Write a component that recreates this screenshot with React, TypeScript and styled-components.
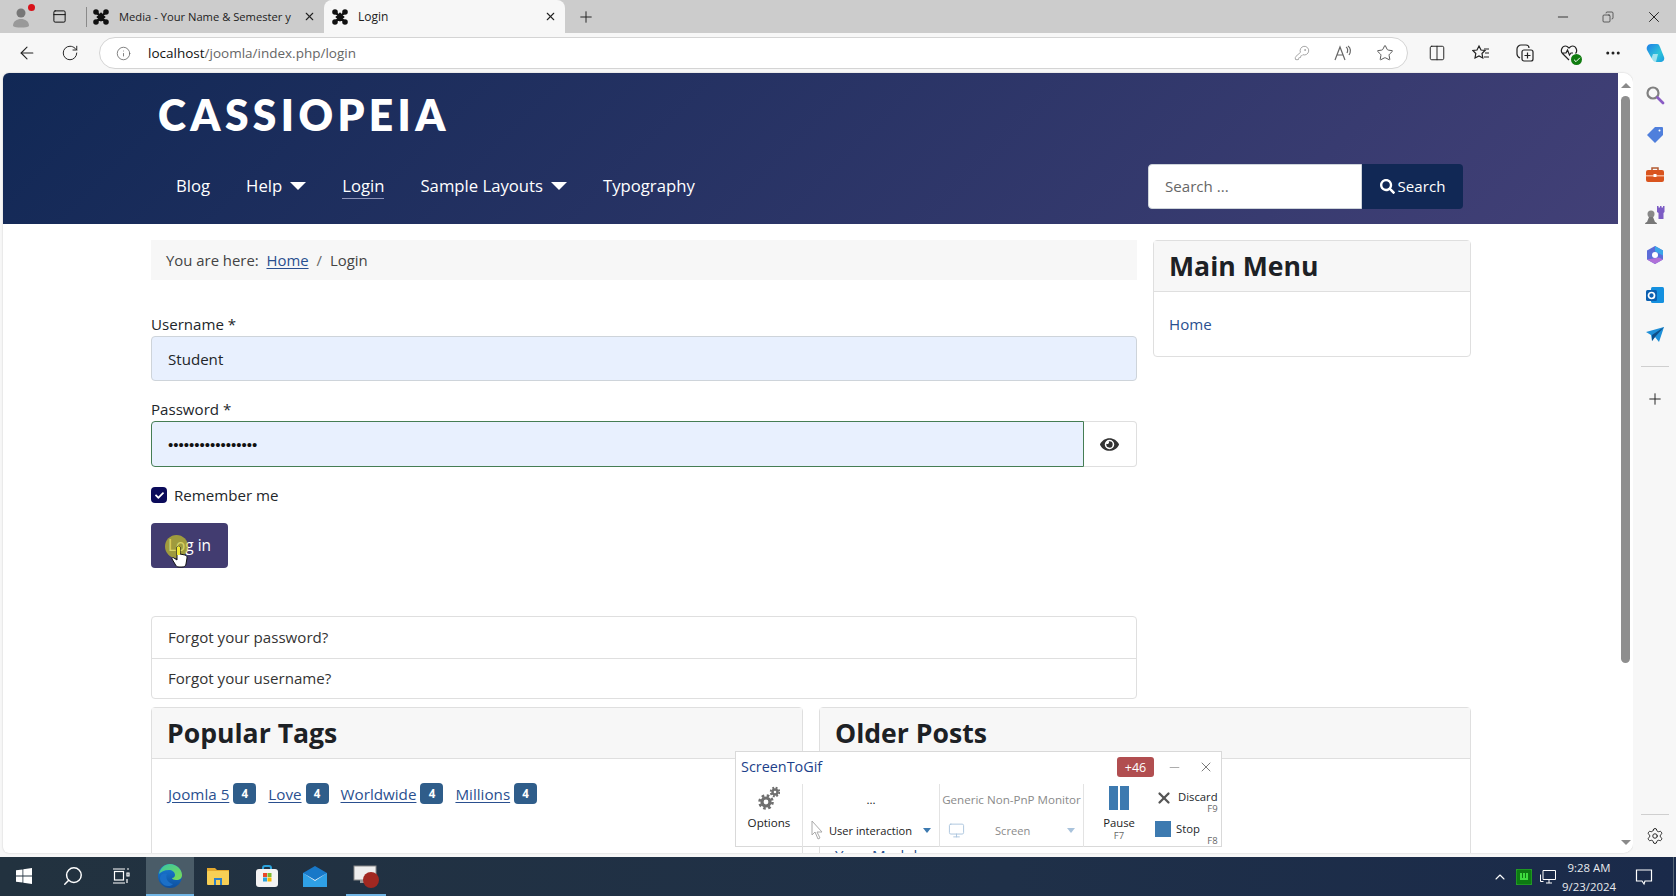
import React from "react";
import styled, { createGlobalStyle } from "styled-components";
import { ArrowLeft, RotateCw, Info, KeyRound, Star, Columns2, Copy, Minus, X, Plus, MoreHorizontal, Search, Settings, PanelTop, ChevronUp, Monitor, Check } from "lucide-react";
import { FaEye, FaSearch, FaCheck } from "react-icons/fa";

const Global = createGlobalStyle`
  html, body { margin: 0; padding: 0; height: 100%; overflow: hidden; }
  body { font-family: "Open Sans", "Liberation Sans", sans-serif; color: #22262a; }
  * { box-sizing: border-box; }
`;
const Screen = styled.div`position: relative; width: 1676px; height: 896px; display: flex; flex-direction: column; background: #f7f7f7; overflow: hidden;`;

const TabBar = styled.div`height: 33px; background: #cccccc; display: flex; align-items: stretch; padding-left: 6px; flex: none;`;
const Avatar = styled.div`position: relative; width: 30px; display: flex; align-items: center; justify-content: center;`;
const RedDot = styled.span`position: absolute; right: 1px; top: 4px; width: 7px; height: 7px; background: #d8121a; border-radius: 50%;`;
const TabIconBtn = styled.div`width: 46px; display: flex; align-items: center; justify-content: center;`;
const Sep = styled.div`width: 1px; height: 20px; margin-left: 4px; background: #8a8a8a; align-self: center;`;
const Tab = styled.div<{ $active?: boolean }>`
  width: ${(p) => (p.$active ? "241px" : "237px")}; display: flex; align-items: center; gap: 10px;
  padding-left: ${(p) => (p.$active ? "8px" : "6px")};
  font-size: ${(p) => (p.$active ? "12px" : "11.2px")}; color: #222; white-space: nowrap; flex: none;
  background: ${(p) => (p.$active ? "#f7f7f7" : "transparent")};
  border-radius: ${(p) => (p.$active ? "8px 8px 0 0" : "0")};
`;
const TabTitle = styled.span`flex: 1; min-width: 0;`;
const TabClose = styled.span`width: 24px; margin-right: 3px; display: flex; justify-content: center; flex: none;`;
const NewTab = styled.div`width: 42px; display: flex; align-items: center; justify-content: center;`;
const Grow = styled.div`flex: 1;`;
const WinBtns = styled.div`display: flex; align-items: center; gap: 31px; padding-right: 13px;`;

const ToolBar = styled.div`height: 40px; display: flex; align-items: center; flex: none; padding-left: 17px; background: #f7f7f7;`;
const NavIcon = styled.div<{ $w: number }>`width: ${(p) => p.$w}px; height: 24px; display: flex; align-items: center; justify-content: flex-start;`;
const AddressBar = styled.div`width: 1309px; height: 32px; border: 1px solid #d4d4d4; border-radius: 16px; background: #fff; display: flex; align-items: center; padding: 0 13px 0 16px;`;
const Url = styled.div`margin-left: 17px; flex: 1; font-size: 13.5px; color: #666;`;
const UrlHost = styled.span`color: #111;`;
const AddrIcons = styled.div`display: flex; align-items: center; gap: 23px;`;
const ToolIcons = styled.div`display: flex; align-items: center; gap: 26px; margin-left: 20px;`;
const CopilotSlot = styled.div`margin-left: -4px; display: flex;`;
const HealthWrap = styled.div`position: relative; width: 18px; height: 18px;`;
const HealthBadge = styled.span`position: absolute; right: -4px; bottom: -3px; width: 11px; height: 11px; background: #107c10; border-radius: 50%; display: flex; align-items: center; justify-content: center;`;

const Middle = styled.div`flex: 1; display: flex; min-height: 0; padding: 0 0 4px 3px;`;
const Page = styled.div`flex: 1; min-width: 0; display: flex; background: #fff; border-radius: 6px 10px 10px 6px; overflow: hidden; box-shadow: 0 0 2px rgba(0,0,0,.2);`;
const PageBody = styled.div`width: 1615px; flex: none; overflow: hidden;`;
const ScrollTrack = styled.div`flex: 1; display: flex; flex-direction: column; align-items: center; padding-top: 10px; padding-bottom: 8px; background: #fff;`;
const ArrowUp = styled.div`width: 0; height: 0; border-left: 5px solid transparent; border-right: 5px solid transparent; border-bottom: 5px solid #8a8a8a;`;
const ArrowDown = styled.div`width: 0; height: 0; border-left: 5px solid transparent; border-right: 5px solid transparent; border-top: 5px solid #8a8a8a; margin-top: auto;`;
const Thumb = styled.div`width: 9px; height: 567px; margin-top: 8px; background: #8e8e8e; border-radius: 5px;`;

const SideBar = styled.div`width: 43px; flex: none; background: #f7f7f7; display: flex; flex-direction: column; align-items: center; padding-top: 12px; gap: 20px;`;
const SideIcon = styled.svg`width: 20px; height: 20px; flex: none;`;
const SideRule = styled.div`width: 28px; height: 1px; background: #cfcfcf;`;
const FirstRule = styled(SideRule)`margin-top: 1px;`;
const SidePlus = styled.div`margin-top: 3px; display: flex;`;
const SideSettings = styled.div`margin-top: auto; padding-bottom: 8px; display: flex; flex-direction: column; align-items: center; gap: 12px;`;

const Header = styled.header`height: 151px; background: linear-gradient(135deg, #112855 0%, #424077 100%); color: #fff; padding: 0 147px; display: flex; flex-direction: column;`;
const Brand = styled.div`margin: 22px 0 0 8px; height: 40px; font: 800 42.5px/40px "Lato", sans-serif; letter-spacing: 4.4px; color: #fff; white-space: nowrap;`;
const NavRow = styled.div`display: flex; align-items: center; justify-content: space-between; margin-top: 29px;`;
const NavList = styled.nav`display: flex; align-items: center; gap: 36px; padding-left: 26px; font-size: 16.7px;`;
const NavLink = styled.a<{ $current?: boolean }>`color: #fff; display: inline-flex; align-items: center; gap: 8px; padding-bottom: 1px; border-bottom: 1px solid ${(p) => (p.$current ? "#8d93b8" : "transparent")};`;
const Caret = styled.span`display: inline-block; width: 0; height: 0; border-left: 8px solid transparent; border-right: 8px solid transparent; border-top: 8px solid #fff;`;
const SearchBox = styled.div`display: flex; height: 45px; margin-right: 8px;`;
const SearchInput = styled.div`width: 214px; background: #fff; border: 1px solid #ced4da; border-radius: 4px 0 0 4px; color: #666; font-size: 15.1px; display: flex; align-items: center; padding: 0 0 2px 16px;`;
const SearchBtn = styled.div`width: 101px; background: #112855; border-radius: 0 4px 4px 0; color: #fff; font-size: 15.1px; display: flex; align-items: center; justify-content: center; gap: 3px; padding-bottom: 1px;`;

const Content = styled.div`display: grid; grid-template-columns: 986px 318px; column-gap: 16px; padding: 16px 0 0 148px;`;
const MainCol = styled.main`display: flex; flex-direction: column;`;
const SideCol = styled.aside``;
const Breadcrumb = styled.div`height: 40px; background: #f7f7f7; display: flex; align-items: center; padding-left: 15px; font-size: 14.9px; color: #444;`;
const Link = styled.a`color: #2a4f8f; text-decoration: underline; text-underline-offset: 2px;`;
const Slash = styled.span`margin: 0 8px; color: #666;`;
const UserField = styled.div`display: flex; flex-direction: column; margin-top: 33px;`;
const PassField = styled.div`display: flex; flex-direction: column; margin-top: 17px;`;
const Label = styled.label`font-size: 15.1px; line-height: 22px; margin-bottom: 1px;`;
const TextInput = styled.div`height: 45px; background: #e8f0fe; border: 1px solid #ced4da; border-radius: 4px; display: flex; align-items: center; padding-left: 16px; font-size: 15.1px; color: #212529;`;
const PassRow = styled.div`display: flex; height: 46px;`;
const PassInput = styled.div`flex: 1; background: #e8f0fe; border: 1px solid #457d54; border-radius: 4px 0 0 4px; display: flex; align-items: center; padding-left: 16px; font: 15px "Liberation Sans", sans-serif; color: #111;`;
const EyeBtn = styled.div`width: 53px; border: 1px solid #dfdfdf; border-left: none; border-radius: 0 4px 4px 0; display: flex; align-items: center; justify-content: center; padding-right: 2px;`;
const CheckRow = styled.div`display: flex; align-items: center; gap: 7px; margin-top: 17px; font-size: 15.1px; height: 22px;`;
const CheckBox = styled.span`width: 16px; height: 16px; border-radius: 4px; background: #0a0a5a; display: flex; align-items: center; justify-content: center;`;
const LoginBtn = styled.button`position: relative; align-self: flex-start; margin-top: 17px; width: 77px; height: 45px; border: none; border-radius: 4px; background: #423c70; color: #fff; font: 15.4px "Open Sans", sans-serif;`;
const ClickDot = styled.span`position: absolute; left: 14px; top: 12px; width: 23px; height: 23px; border-radius: 50%; background: rgba(200,195,40,.7);`;
const Cursor = styled.svg`position: absolute; left: 20px; top: 22px; width: 18px; height: 24px;`;
const LinkList = styled.div`margin-top: 48px; border: 1px solid #dfdfdf; border-radius: 4px;`;
const LinkItem = styled.div`height: 40.5px; display: flex; align-items: center; padding-left: 16px; font-size: 15.1px; color: #333; & + & { border-top: 1px solid #dfdfdf; }`;
const BottomRow = styled.div`grid-column: 1 / span 2; display: grid; grid-template-columns: 652px 652px; column-gap: 16px; margin-top: 8px;`;
const Card = styled.section`border: 1px solid #dfdfdf; border-radius: 4px; background: #fff; display: flex; flex-direction: column; min-height: 170px;`;
const CardHead = styled.h3`margin: 0; flex: none; height: 51px; background: #f7f7f7; border-bottom: 1px solid #dfdfdf; display: flex; align-items: center; padding-left: 15px; font-size: 26.6px; font-weight: 700; color: #1d2125; line-height: 1;`;
const CardBody = styled.div`padding: 24px 15px; font-size: 15.2px;`;
const TagRow = styled.div`display: flex; align-items: center; gap: 12px; padding-left: 1px;`;
const Tag = styled.span`display: inline-flex; align-items: center; gap: 4px;`;
const Badge = styled.span`width: 23px; height: 21px; border-radius: 4px; background: #2f5d8a; color: #fff; font-size: 11.5px; font-weight: 700; display: inline-flex; align-items: center; justify-content: center;`;
const ModuleLink = styled(Link)`display: block; padding-top: 62px;`;
const MenuCard = styled(Card)`min-height: 0; height: 117px;`;
const MenuBody = styled.div`padding: 22px 15px; font-size: 15.1px; color: #2a4f8f;`;

const TaskBar = styled.div`height: 39px; flex: none; background: linear-gradient(90deg, #22323f, #1f3048 60%, #1a2a4a); display: flex; align-items: stretch;`;
const TaskItem = styled.div<{ $active?: boolean }>`
  width: 48.5px; display: flex; align-items: center; justify-content: center;
  background: ${(p) => (p.$active ? "#4a5c68" : "transparent")};
  border-bottom: 2px solid ${(p) => (p.$active ? "#6fb4e4" : "transparent")};
`;
const OpenTaskItem = styled(TaskItem)`width: 40px; margin-left: 6.5px; border-bottom-color: #6fb4e4;`;
const Tray = styled.div`margin-left: auto; display: flex; align-items: center; color: #fff; gap: 8px;`;
const Clock = styled.div`font-size: 11.4px; line-height: 19px; text-align: center; color: #e8eaee; width: 64px; margin: 0 6px 0 -7px;`;
const ShowDesktop = styled.div`width: 1px; height: 100%; margin: 0 2px 0 12px; background: #566574;`;

const Recorder = styled.div`position: absolute; left: 735px; top: 751px; width: 487px; height: 96px; background: #fff; border: 1px solid #d9d9d9; display: flex; flex-direction: column;`;
const RecTop = styled.div`height: 32px; flex: none; display: flex; align-items: center; padding: 0 7px 0 5px;`;
const RecTitle = styled.div`color: #1c3f8a; font-size: 14.4px; flex: 1; padding-bottom: 3px;`;
const Count = styled.div`background: #b14e50; color: #fff; font-size: 12.5px; height: 20px; width: 37px; border-radius: 3px; display: flex; align-items: center; justify-content: center; margin: 0 13px 2px 0;`;
const RecBtns = styled.div`display: flex; align-items: center; gap: 16px; padding-bottom: 2px;`;
const RecRow = styled.div`flex: 1; display: grid; grid-template-columns: 67px 137px 144px 1fr;`;
const RecCell = styled.div`border-right: 1px solid #e3e3e3; display: flex; flex-direction: column; align-items: center; color: #222; margin-bottom: 2px; min-width: 0;`;
const RecOptions = styled(RecCell)`font-size: 11.6px; gap: 5px; padding-top: 2px;`;
const RecLine = styled.div<{ $muted?: boolean }>`height: 30px; width: 100%; display: flex; align-items: center; gap: 4px; padding: 0 8px; font-size: 11.1px; white-space: nowrap; color: ${(p) => (p.$muted ? "#8a8a8a" : "#222")};`;
const Centered = styled(RecLine)`justify-content: center; padding: 0 2px; height: 31px; font-size: 11.6px;`;
const ScreenLabel = styled.span`margin-left: 26px;`;
const SmallCaret = styled.span<{ $muted?: boolean }>`margin-left: auto; width: 0; height: 0; border-left: 4px solid transparent; border-right: 4px solid transparent; border-top: 5px solid ${(p) => (p.$muted ? "#a9c3dc" : "#3d7ab0")};`;
const RecAction = styled.div`display: grid; grid-template-columns: 60px 1fr; padding: 0 5px; font-size: 11.3px;`;
const PauseCol = styled.div`display: flex; flex-direction: column; align-items: center; padding-top: 2px; color: #222; line-height: 15px;`;
const PauseBars = styled.div`display: flex; gap: 2px; margin-bottom: 5px;`;
const PauseBar = styled.span`width: 9px; height: 24px; background: #3d7ab0;`;
const Key = styled.span`font-size: 9.5px; color: #666; line-height: 11px;`;
const ActCol = styled.div`display: flex; flex-direction: column; gap: 4px; padding: 5px 0 0 6px;`;
const Act = styled.div`position: relative; display: flex; align-items: flex-start; gap: 5px; height: 28px; line-height: 16px;`;
const ActKey = styled(Key)`position: absolute; right: 0; bottom: 3px;`;
const StopSq = styled.span`width: 16px; height: 16px; background: #3d7ab0;`;

const JoomlaIcon = () => (
  <svg width="16" height="16" viewBox="0 0 16 16" fill="none" stroke="#111" strokeWidth="2.4" strokeLinecap="round">
    <path d="M3 3l10 10M13 3L3 13M5 8l3-3 3 3-3 3z" />
    <circle cx="3" cy="3" r="1.6" fill="#111" /><circle cx="13" cy="3" r="1.6" fill="#111" /><circle cx="3" cy="13" r="1.6" fill="#111" /><circle cx="13" cy="13" r="1.6" fill="#111" />
  </svg>
);

export default function App() {
  const S = { strokeWidth: 1.3 } as const;
  return (
    <Screen>
      <Global />
      <TabBar>
        <Avatar>
          <svg width="20" height="22" viewBox="0 0 20 22"><circle cx="10" cy="7" r="4.5" fill="#777" /><path d="M2 20c0-5 4-7 8-7s8 2 8 7c-2 2-14 2-16 0z" fill="#999" /></svg>
          <RedDot />
        </Avatar>
        <TabIconBtn><PanelTop size={15} color="#111" strokeWidth={1.6} /></TabIconBtn>
        <Sep />
        <Tab><JoomlaIcon /><TabTitle>Media - Your Name &amp; Semester y</TabTitle><TabClose><X size={13} color="#222" /></TabClose></Tab>
        <Tab $active><JoomlaIcon /><TabTitle>Login</TabTitle><TabClose><X size={13} color="#222" /></TabClose></Tab>
        <NewTab><Plus size={18} color="#222" strokeWidth={1.3} /></NewTab>
        <Grow />
        <WinBtns>
          <Minus size={16} color="#222" {...S} />
          <Copy size={12} color="#222" {...S} style={{ transform: "scaleX(-1)" }} />
          <X size={18} color="#222" {...S} />
        </WinBtns>
      </TabBar>
      <ToolBar>
        <NavIcon $w={44}><ArrowLeft size={20} color="#222" {...S} /></NavIcon>
        <NavIcon $w={38}><RotateCw size={18} color="#222" {...S} /></NavIcon>
        <AddressBar>
          <Info size={15} color="#666" {...S} />
          <Url><UrlHost>localhost</UrlHost>/joomla/index.php/login</Url>
          <AddrIcons>
            <KeyRound size={16} color="#999" {...S} />
            <svg width="20" height="18" viewBox="0 0 20 18" fill="none" stroke="#666" strokeWidth="1.2"><path d="M2 16L7 3l5 13M4 11h6M13 3c2 1 2 4 1 6M15 2c3 2 3 6 1 9" /></svg>
            <Star size={18} color="#555" {...S} />
          </AddrIcons>
        </AddressBar>
        <ToolIcons>
          <Columns2 size={18} color="#222" {...S} />
          <svg width="18" height="18" viewBox="0 0 18 18" fill="none" stroke="#222" strokeWidth="1.2"><path d="M7 2l2 4 4 .5-3 3 .8 4.500L7 12l-4 2 .8-4.500-3-3L5 6z" /><path d="M12 5h5M13 9h4M12 13h5" /></svg>
          <svg width="18" height="18" viewBox="0 0 18 18" fill="none" stroke="#222" strokeWidth="1.2"><rect x="6" y="6" width="11" height="11" rx="2" /><path d="M11.500 8.500v6M8.500 11.500h6M4 14c-2-1-3-2-3-4V5c0-2 2-4 4-4h5c1.500 0 3 1 3 3" /></svg>
          <HealthWrap>
            <svg width="18" height="18" viewBox="0 0 18 18" fill="none" stroke="#222" strokeWidth="1.2"><path d="M9 16L2.500 9.500C0 7 2 2 5.500 2 7 2 8 3 9 4c1-1 2-2 3.500-2C16 2 18 7 15.500 9.500M2 9h4l1.500-3 2 5 1.500-2h2" /></svg>
            <HealthBadge><Check size={8} color="#fff" strokeWidth={3} /></HealthBadge>
          </HealthWrap>
          <MoreHorizontal size={18} color="#222" />
          <CopilotSlot>
            <svg width="22" height="22" viewBox="0 0 22 22"><defs><linearGradient id="cop" x1="0" y1="0" x2="1" y2="1"><stop offset="0" stopColor="#1f7ee8" /><stop offset=".6" stopColor="#2cc5d8" /><stop offset="1" stopColor="#1a9ae0" /></linearGradient></defs><path d="M7 2h6c2 0 2 1 3 3l4 10c1 3-1 5-4 5h-4c-2 0-3-1-4-3L3 8C2 5 4 2 7 2z" fill="url(#cop)" /><path d="M6 20l3-8h5l-2 8z" fill="#fff" opacity=".55" /></svg>
          </CopilotSlot>
        </ToolIcons>
      </ToolBar>
      <Middle>
        <Page>
          <PageBody>
            <Header>
              <Brand>CASSIOPEIA</Brand>
              <NavRow>
                <NavList>
                  <NavLink>Blog</NavLink>
                  <NavLink>Help <Caret /></NavLink>
                  <NavLink $current>Login</NavLink>
                  <NavLink>Sample Layouts <Caret /></NavLink>
                  <NavLink>Typography</NavLink>
                </NavList>
                <SearchBox>
                  <SearchInput>Search ...</SearchInput>
                  <SearchBtn><FaSearch size={15} color="#fff" />Search</SearchBtn>
                </SearchBox>
              </NavRow>
            </Header>
            <Content>
              <MainCol>
                <Breadcrumb>You are here:&nbsp;&nbsp;<Link>Home</Link><Slash>/</Slash>Login</Breadcrumb>
                <UserField>
                  <Label>Username *</Label>
                  <TextInput>Student</TextInput>
                </UserField>
                <PassField>
                  <Label>Password *</Label>
                  <PassRow>
                    <PassInput>•••••••••••••••••</PassInput>
                    <EyeBtn><FaEye size={19} color="#333" /></EyeBtn>
                  </PassRow>
                </PassField>
                <CheckRow><CheckBox><FaCheck size={9} color="#fff" /></CheckBox>Remember me</CheckRow>
                <LoginBtn>
                  <ClickDot />
                  Log in
                  <Cursor viewBox="0 0 18 24"><path d="M6 2c1-1 2-1 3 0v7l5 1c2 .500 2 2 2 3l-1 6c0 2-2 3-4 3H8c-2 0-3-1-4-3l-3-5c-.5-1 1-2 2-1l3 2z" fill="#fff" stroke="#111" strokeWidth="1" /><path d="M6 2c1-1 2-1 3 0v8H6z" fill="#f3ea36" /></Cursor>
                </LoginBtn>
                <LinkList>
                  <LinkItem>Forgot your password?</LinkItem>
                  <LinkItem>Forgot your username?</LinkItem>
                </LinkList>
              </MainCol>
              <SideCol>
                <MenuCard>
                  <CardHead>Main Menu</CardHead>
                  <MenuBody>Home</MenuBody>
                </MenuCard>
              </SideCol>
              <BottomRow>
                <Card>
                  <CardHead>Popular Tags</CardHead>
                  <CardBody>
                    <TagRow>
                      <Tag><Link>Joomla 5</Link><Badge>4</Badge></Tag>
                      <Tag><Link>Love</Link><Badge>4</Badge></Tag>
                      <Tag><Link>Worldwide</Link><Badge>4</Badge></Tag>
                      <Tag><Link>Millions</Link><Badge>4</Badge></Tag>
                    </TagRow>
                  </CardBody>
                </Card>
                <Card>
                  <CardHead>Older Posts</CardHead>
                  <CardBody><ModuleLink>Your Modules</ModuleLink></CardBody>
                </Card>
              </BottomRow>
            </Content>
          </PageBody>
          <ScrollTrack><ArrowUp /><Thumb /><ArrowDown /></ScrollTrack>
        </Page>
        <SideBar>
          <SideIcon viewBox="0 0 20 20"><circle cx="8" cy="8" r="5.500" fill="none" stroke="#808080" strokeWidth="2.200" /><path d="M12.500 12.500L18 18" stroke="#8a5cc4" strokeWidth="2.800" strokeLinecap="round" /></SideIcon>
          <SideIcon viewBox="0 0 20 20"><path d="M10 2h7c1 0 1 1 1 1v7l-8 8-8-8z" fill="#4f7fdc" /><circle cx="14.500" cy="5.500" r="1" fill="#fff" /></SideIcon>
          <SideIcon viewBox="0 0 20 20"><path d="M7 5V3h6v2" fill="none" stroke="#b35a30" strokeWidth="1.500" /><rect x="1" y="5" width="18" height="12" rx="2" fill="#d9541e" /><rect x="1" y="10" width="18" height="1.500" fill="#f5b090" /><rect x="8.500" y="9" width="3" height="3" fill="#fff" /></SideIcon>
          <SideIcon viewBox="0 0 20 20"><circle cx="6" cy="9" r="3.500" fill="#888" /><path d="M0 19c0-1 1-2 2-2l2-5h4l2 5c1 0 2 1 2 2z" fill="#777" /><path d="M12 1h1.500v1.500H15V1h1.500v1.500H18V1h1.500v6l-1 1v6h-5V8l-1.500-1z" fill="#7c5cc4" /></SideIcon>
          <SideIcon viewBox="0 0 20 20"><path d="M10 1l8 4.500v9L10 19l-8-4.500v-9z" fill="#5c6cd8" /><path d="M10 1l8 4.500v5l-8-4z" fill="#3aa6e8" /><path d="M2 14.500L10 19l8-4.500-4-2z" fill="#b070d8" /><circle cx="10" cy="10" r="3" fill="#fff" /></SideIcon>
          <SideIcon viewBox="0 0 20 20"><rect x="6" y="2" width="13" height="16" rx="1.500" fill="#1490df" /><rect x="1" y="5" width="11" height="11" rx="1.500" fill="#0a5fb0" /><circle cx="6.500" cy="10.500" r="3" fill="none" stroke="#fff" strokeWidth="1.700" /></SideIcon>
          <SideIcon viewBox="0 0 20 20"><path d="M1 7l18-5-5 15-4-5-3 4-1-6z" fill="#1e8fd8" /><path d="M7 10l12-8-9 10-3 4z" fill="#0f4f8a" /></SideIcon>
          <FirstRule />
          <SidePlus><Plus size={18} color="#222" strokeWidth={1.3} /></SidePlus>
          <SideSettings>
            <SideRule />
            <Settings size={18} color="#222" {...S} />
          </SideSettings>
        </SideBar>
      </Middle>
      <TaskBar>
        <TaskItem>
          <svg width="16" height="16" viewBox="0 0 16 16" fill="#fff"><path d="M0 2.300l6.500-.9v6.200H0zM7.300 1.300L16 0v7.600H7.300zM0 8.400h6.500v6.200L0 13.700zM7.300 8.400H16V16l-8.700-1.200z" /></svg>
        </TaskItem>
        <TaskItem><Search size={22} color="#fff" strokeWidth={1.6} style={{ transform: "scaleX(-1)" }} /></TaskItem>
        <TaskItem>
          <svg width="18" height="16" viewBox="0 0 18 16" fill="none" stroke="#fff" strokeWidth="1.200"><rect x="2.500" y="3.500" width="9" height="8.500" /><path d="M1 1h12M1 15h12M15 1h2M15 5h2v3h-2zM15 11v4" /></svg>
        </TaskItem>
        <TaskItem $active>
          <svg width="26" height="26" viewBox="0 0 26 26"><defs><linearGradient id="e1" x1="0" y1="0" x2="1" y2="1"><stop offset="0" stopColor="#37c4a4" /><stop offset="1" stopColor="#7cdc54" /></linearGradient><linearGradient id="e2" x1="0" y1="0" x2="0" y2="1"><stop offset="0" stopColor="#1a7ed8" /><stop offset="1" stopColor="#0d4f9e" /></linearGradient></defs><circle cx="13" cy="13" r="12" fill="url(#e2)" /><path d="M2 11C3 5 8 1 13 1c6 0 12 5 12 11 0 3-2 5-6 5-2 0-4-1-4-2 2 0 3-2 3-3 0-3-3-5-6-5-5 0-8 2-10 4z" fill="url(#e1)" /><path d="M10 11c-2 4 1 9 6 10-1 2-6 3-9 1-4-3-5-7-3-10 1-1 4-2 6-1z" fill="#1b6fc7" /></svg>
        </TaskItem>
        <TaskItem>
          <svg width="22" height="20" viewBox="0 0 22 20"><path d="M0 2h8l2 2h12v4H0z" fill="#e4a92e" /><rect y="5" width="22" height="14" rx="1" fill="#f7cf55" /><rect x="7" y="12" width="8" height="7" fill="#2f80c7" /><rect x="9" y="14" width="4" height="5" fill="#f7cf55" /></svg>
        </TaskItem>
        <TaskItem>
          <svg width="24" height="24" viewBox="0 0 24 24"><path d="M8 6V4c0-1 1-2 2-2h4c1 0 2 1 2 2v2" fill="none" stroke="#2ba3dc" strokeWidth="2" /><rect x="1" y="5" width="22" height="18" rx="3" fill="#f3f3f3" /><rect x="8" y="9" width="4" height="4" fill="#e8482a" /><rect x="12.500" y="9" width="4" height="4" fill="#7db92e" /><rect x="8" y="13.500" width="4" height="4" fill="#2ba3dc" /><rect x="12.500" y="13.500" width="4" height="4" fill="#f7b900" /></svg>
        </TaskItem>
        <TaskItem>
          <svg width="24" height="22" viewBox="0 0 24 22"><path d="M0 8l12-7 12 7v14H0z" fill="#1878c8" /><path d="M0 8l12 8 12-8v14H0z" fill="#2fa0e6" /><path d="M0 8l12 8 12-8-12 7z" fill="#fff" /></svg>
        </TaskItem>
        <OpenTaskItem>
          <svg width="28" height="26" viewBox="0 0 28 26"><rect x="2" y="3" width="22" height="14" fill="#eee" stroke="#888" /><rect x="8" y="17" width="10" height="3" fill="#999" /><circle cx="19" cy="17" r="8" fill="#a12821" /></svg>
        </OpenTaskItem>
        <Tray>
          <ChevronUp size={16} color="#fff" strokeWidth={1.6} />
          <svg width="16" height="16" viewBox="0 0 16 16"><rect width="16" height="16" rx="2" fill="#0d7a12" stroke="#2fb52f" /><path d="M4 4v7h8V4h-2v5H9V4H7v5H6V4z" fill="#3fdc3f" /></svg>
          <svg width="16" height="14" viewBox="0 0 16 14" fill="none" stroke="#fff"><path d="M.5 4.500v7h3M3 .5h12.500v9H3zM6 13h6M9 9.500V13" /></svg>
          <Clock>9:28 AM<br />9/23/2024</Clock>
          <svg width="18" height="18" viewBox="0 0 18 18" fill="none" stroke="#fff" strokeWidth="1.200"><path d="M1.500 2h15v11H10l-1 3-2-3H1.500z" /></svg>
          <ShowDesktop />
        </Tray>
      </TaskBar>
      <Recorder>
        <RecTop>
          <RecTitle>ScreenToGif</RecTitle>
          <Count>+46</Count>
          <RecBtns>
            <Minus size={15} color="#999" {...S} />
            <X size={16} color="#666" {...S} />
          </RecBtns>
        </RecTop>
        <RecRow>
          <RecOptions>
            <svg width="22" height="24" viewBox="0 0 22 24" fill="none" stroke="#6f6f6f">
              <circle cx="8" cy="16" r="4" strokeWidth="3.200" />
              <circle cx="8" cy="16" r="6.500" strokeWidth="2.600" strokeDasharray="2.600 2.500" />
              <circle cx="17" cy="6" r="2.500" strokeWidth="2.400" />
              <circle cx="17" cy="6" r="4.300" strokeWidth="1.900" strokeDasharray="1.900 1.500" />
            </svg>
            Options
          </RecOptions>
          <RecCell>
            <Centered>...</Centered>
            <RecLine>
              <svg width="14" height="20" viewBox="0 0 14 20" fill="#fff" stroke="#aaa"><path d="M1 1v14l3-3 3 7 2-1-3-6h5z" /></svg>
              User interaction
              <SmallCaret />
            </RecLine>
          </RecCell>
          <RecCell>
            <Centered $muted>Generic Non-PnP Monitor</Centered>
            <RecLine $muted>
              <Monitor size={17} color="#a9c3dc" {...S} />
              <ScreenLabel>Screen</ScreenLabel>
              <SmallCaret $muted />
            </RecLine>
          </RecCell>
          <RecAction>
            <PauseCol>
              <PauseBars><PauseBar /><PauseBar /></PauseBars>
              Pause
              <Key>F7</Key>
            </PauseCol>
            <ActCol>
              <Act><X size={18} color="#555" strokeWidth={3} />Discard<ActKey>F9</ActKey></Act>
              <Act><StopSq />Stop<ActKey>F8</ActKey></Act>
            </ActCol>
          </RecAction>
        </RecRow>
      </Recorder>
    </Screen>
  );
}
